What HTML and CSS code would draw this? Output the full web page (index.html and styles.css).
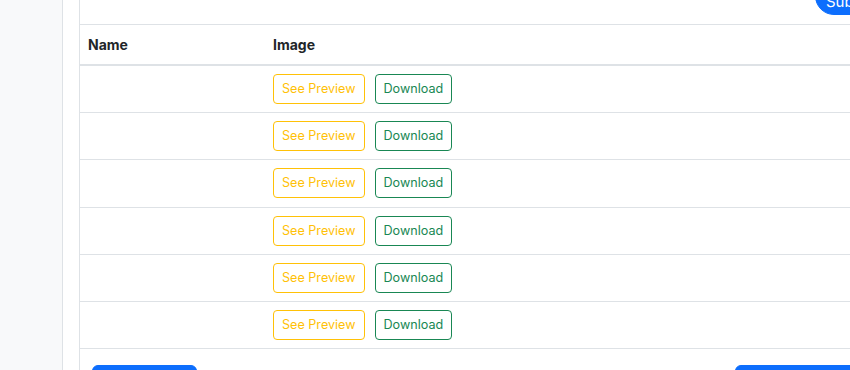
FILE: index.html
```html
<!DOCTYPE html>
<html lang="en">
<head>
    <meta charset="UTF-8">
    <meta name="viewport" content="width=device-width, initial-scale=1.0">
    <title>Images</title>
    <link rel="stylesheet" href="styles.css">
</head>
<body>
    <aside class="sidebar"></aside>

    <main class="main">
        <div class="card">
            <div class="toolbar">
                <button class="btn btn-primary btn-pill">Submit</button>
            </div>

            <table class="table">
                <thead>
                    <tr>
                        <th class="col-name">Name</th>
                        <th>Image</th>
                    </tr>
                </thead>
                <tbody>
                    <tr>
                        <td></td>
                        <td><button class="btn btn-sm btn-outline-warning">See Preview</button><button class="btn btn-sm btn-outline-success">Download</button></td>
                    </tr>
                    <tr>
                        <td></td>
                        <td><button class="btn btn-sm btn-outline-warning">See Preview</button><button class="btn btn-sm btn-outline-success">Download</button></td>
                    </tr>
                    <tr>
                        <td></td>
                        <td><button class="btn btn-sm btn-outline-warning">See Preview</button><button class="btn btn-sm btn-outline-success">Download</button></td>
                    </tr>
                    <tr>
                        <td></td>
                        <td><button class="btn btn-sm btn-outline-warning">See Preview</button><button class="btn btn-sm btn-outline-success">Download</button></td>
                    </tr>
                    <tr>
                        <td></td>
                        <td><button class="btn btn-sm btn-outline-warning">See Preview</button><button class="btn btn-sm btn-outline-success">Download</button></td>
                    </tr>
                    <tr>
                        <td></td>
                        <td><button class="btn btn-sm btn-outline-warning">See Preview</button><button class="btn btn-sm btn-outline-success">Download</button></td>
                    </tr>
                </tbody>
            </table>

            <div class="card-footer">
                <button class="btn btn-primary btn-prev">Previous</button>
                <button class="btn btn-primary btn-next">Next Page</button>
            </div>
        </div>
    </main>
</body>
</html>
```

FILE: styles.css
```css
body, html {
    margin: 0;
    padding: 0;
    font-family: Inter, "Noto Sans", sans-serif;
    background-color: #ffffff;
    color: #212529;
    height: 100%;
    overflow: hidden;
}
body {
    display: flex;
}
.sidebar {
    width: 62px;
    flex-shrink: 0;
    background-color: #f8f9fa;
    border-right: 1px solid #dee2e6;
}
.main {
    padding-left: 16px;
    flex-shrink: 0;
}
.card {
    width: 820px;
    margin-top: -30px;
    border-left: 1px solid #dee2e6;
    background-color: #fff;
}
.toolbar {
    display: flex;
    justify-content: flex-end;
    padding: 7px 0 9px;
}
.btn {
    font-family: inherit;
    font-size: 16px;
    line-height: 1.5;
    padding: 6px 12px;
    border: 1px solid transparent;
    border-radius: 6px;
    background: transparent;
    cursor: pointer;
}
.btn-primary {
    background-color: #0d6efd;
    border-color: #0d6efd;
    color: #fff;
}
.btn-pill {
    border-radius: 50px;
    width: 85px;
    font-size: 15px;
    line-height: 24px;
    padding: 12px 12px 0 10px;
    text-align: left;
}
.btn-sm {
    font-size: 12.6px;
    line-height: 20px;
    padding: 4px 8px;
    border-radius: 4px;
}
.btn-outline-warning {
    color: #ffc107;
    border-color: #ffc107;
    margin-right: 10px;
}
.btn-outline-success {
    color: #198754;
    border-color: #198754;
}
.table {
    width: 100%;
    border-collapse: collapse;
    border-top: 1px solid #dee2e6;
    font-size: 14px;
}
.table th {
    text-align: left;
    font-weight: 700;
    padding: 9px 8px;
    height: 21px;
    border-bottom: 2px solid #dee2e6;
}
.col-name {
    width: 169px;
}
.table td {
    padding: 8px;
    height: 30.2px;
    border-bottom: 1px solid #dee2e6;
}
.card-footer {
    display: flex;
    justify-content: space-between;
    padding: 16px 12px;
}
.btn-prev {
    width: 105px;
}
.btn-next {
    width: 153px;
}
```
